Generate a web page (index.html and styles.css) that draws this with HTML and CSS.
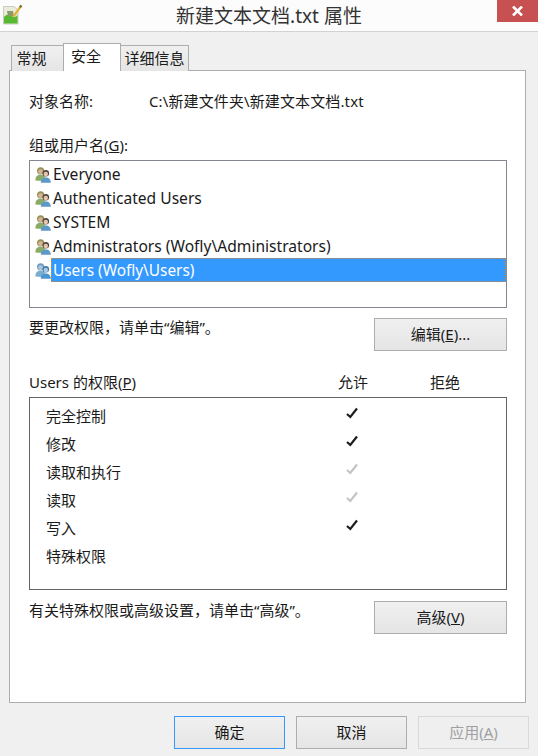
FILE: index.html
```html
<!DOCTYPE html>
<html lang="zh-CN">
<head>
  <meta charset="UTF-8" />
  <title>新建文本文档.txt 属性</title>
  <link rel="stylesheet" href="styles.css">
</head>
<body>
  <svg class="defs" width="0" height="0">
    <symbol id="group" viewBox="0 0 16 16">
      <circle class="back-hair" cx="5.6" cy="3.8" r="3.6"/>
      <circle class="back-skin" cx="5.6" cy="4.7" r="2.4"/>
      <path class="back-body" d="M0.4 13 C0.4 9.5 2.5 7.8 5.5 7.8 C7.5 7.8 9.3 8.6 10 10 L7.5 14 L0.4 13.5 Z"/>
      <circle class="front-hair" cx="10.8" cy="6.2" r="3.3"/>
      <circle class="front-skin" cx="10.8" cy="7" r="2.2"/>
      <path class="front-body" d="M5.8 15.8 C5.8 12.4 7.8 10.4 10.8 10.4 C13.8 10.4 15.8 12.4 15.8 15.8 Z"/>
    </symbol>
    <symbol id="tick" viewBox="0 0 12 12">
      <path d="M1 7 L4.3 10 L11 1.5" fill="none" stroke="currentColor" stroke-width="2.2"/>
    </symbol>
  </svg>

  <div class="window">
    <div class="titlebar">
      <svg class="app-icon" width="22" height="22" viewBox="0 0 22 22">
        <path d="M2.5 3.5 H13 L17 7 V21 H2.5 Z" fill="#e9ecd8" stroke="#c9ccc0"/>
        <path d="M3 14 C6 11 9 11 11 13 C13 14.5 15 14 16.5 12 V20.5 H3 Z" fill="#58b832"/>
        <path d="M6 8 H12 L13 13 H7 Z" fill="#8c9a6a"/>
        <path d="M12.5 13.5 L20 3" stroke="#e3b23c" stroke-width="2.2"/>
        <path d="M19 4.4 L20.4 2.4" stroke="#7a6a3a" stroke-width="2.2"/>
      </svg>
      <span class="title">新建文本文档.txt 属性</span>
      <div class="close">
        <svg width="11" height="10" viewBox="0 0 11 10"><path d="M1 0.5 L10 9.5 M10 0.5 L1 9.5" stroke="#fff" stroke-width="2.6"/></svg>
      </div>
    </div>

    <div class="tabs">
      <div class="tab tab-first">常规</div>
      <div class="tab tab-active">安全</div>
      <div class="tab tab-last">详细信息</div>
    </div>

    <div class="panel">
      <div class="object-row">
        <span class="object-label">对象名称:</span>
        <span class="object-path">C:\新建文件夹\新建文本文档.txt</span>
      </div>

      <div class="group-label">组或用户名(<u>G</u>):</div>
      <div class="listbox">
        <div class="user"><svg class="user-icon"><use href="#group"/></svg><span class="user-name">Everyone</span></div>
        <div class="user"><svg class="user-icon"><use href="#group"/></svg><span class="user-name">Authenticated Users</span></div>
        <div class="user"><svg class="user-icon"><use href="#group"/></svg><span class="user-name">SYSTEM</span></div>
        <div class="user"><svg class="user-icon"><use href="#group"/></svg><span class="user-name">Administrators (Wofly\Administrators)</span></div>
        <div class="user selected"><svg class="user-icon"><use href="#group"/></svg><span class="user-name">Users (Wofly\Users)</span></div>
      </div>

      <div class="action-row">
        <span class="hint">要更改权限，请单击“编辑”。</span>
        <button class="btn">编辑(<u>E</u>)...</button>
      </div>

      <div class="perm-head">
        <span class="perm-title">Users 的权限(<u>P</u>)</span>
        <span class="perm-allow">允许</span>
        <span class="perm-deny">拒绝</span>
      </div>
      <div class="perm-box">
        <div class="perm"><span class="perm-name">完全控制</span><svg class="tick"><use href="#tick"/></svg></div>
        <div class="perm"><span class="perm-name">修改</span><svg class="tick"><use href="#tick"/></svg></div>
        <div class="perm"><span class="perm-name">读取和执行</span><svg class="tick inherited"><use href="#tick"/></svg></div>
        <div class="perm"><span class="perm-name">读取</span><svg class="tick inherited"><use href="#tick"/></svg></div>
        <div class="perm"><span class="perm-name">写入</span><svg class="tick"><use href="#tick"/></svg></div>
        <div class="perm"><span class="perm-name">特殊权限</span></div>
      </div>

      <div class="action-row action-row-adv">
        <span class="hint">有关特殊权限或高级设置，请单击“高级”。</span>
        <button class="btn">高级(<u>V</u>)</button>
      </div>
    </div>

    <div class="footer">
      <button class="btn btn-foot btn-default">确定</button>
      <button class="btn btn-foot">取消</button>
      <button class="btn btn-foot btn-disabled">应用(<u>A</u>)</button>
    </div>
  </div>
</body>
</html>
```

FILE: styles.css
```css
html, body {
  margin: 0;
  height: 756px;
  overflow: hidden;
  background: #fff;
}
body {
  font-family: "Noto Sans", "Noto Sans CJK SC", sans-serif;
  font-size: 15px;
  color: #1a1a1a;
}
.defs {
  position: absolute;
}
.window {
  width: 538px;
  height: 756px;
  background: #f0f0f0;
}
.titlebar {
  position: relative;
  display: flex;
  justify-content: center;
  align-items: center;
  height: 32px;
  background: #fcfcfc;
  border-bottom: 1px solid #d2d2d2;
  box-sizing: border-box;
  font-size: 19px;
  color: #333;
}
.title {
  line-height: 28px;
}
.app-icon {
  position: absolute;
  left: 1px;
  top: 3px;
}
.close {
  position: absolute;
  right: 0;
  top: 0;
  width: 41px;
  height: 22px;
  background: #c75050;
  display: flex;
  justify-content: center;
  align-items: center;
}

/* tabs */
.tabs {
  display: flex;
  align-items: flex-end;
  height: 27px;
  margin: 11px 0 0 11px;
}
.tab {
  box-sizing: border-box;
  height: 26px;
  margin-bottom: -1px;
  border: 1px solid #adadad;
  border-bottom: none;
  background: linear-gradient(#f0f0f0, #e5e5e5);
  text-align: center;
  line-height: 24px;
}
.tab-first {
  width: 52px;
  padding-right: 12px;
  border-right: none;
}
.tab-active {
  position: relative;
  width: 58px;
  height: 28px;
  padding-right: 12px;
  background: #fff;
  line-height: 25px;
}
.tab-last {
  width: 68px;
  border-left: none;
}

.panel {
  box-sizing: border-box;
  width: 517px;
  height: 633px;
  margin-left: 9px;
  padding: 0 18px 0 19px;
  background: #fff;
  border: 1px solid #adadad;
}
.object-row {
  display: flex;
  height: 20px;
  line-height: 20px;
  margin-top: 20px;
}
.object-label {
  width: 120px;
}
.object-path {
  letter-spacing: 0.12px;
}
.group-label {
  height: 20px;
  line-height: 20px;
  margin-top: 24px;
}

/* user list */
.listbox {
  box-sizing: border-box;
  height: 148px;
  margin-top: 5px;
  padding: 1px 0 1px 1px;
  border: 1px solid #828790;
}
.user {
  display: flex;
  align-items: center;
  height: 24px;
  padding-left: 4px;
  --back-hair: #97925a;
  --back-skin: #d8b592;
  --back-body: #8cab68;
  --front-hair: #4f483e;
  --front-skin: #e6c6a8;
  --front-body: #5d97c6;
}
.user-icon {
  width: 16px;
  height: 16px;
  flex-shrink: 0;
  margin-top: 1px;
}
.user-name {
  flex: 1;
  height: 24px;
  line-height: 25px;
  padding-left: 2px;
  font-size: 15.6px;
}
.back-hair { fill: var(--back-hair); }
.back-skin { fill: var(--back-skin); }
.back-body { fill: var(--back-body); }
.front-hair { fill: var(--front-hair); }
.front-skin { fill: var(--front-skin); }
.front-body { fill: var(--front-body); }

.selected {
  --back-hair: #6f9cbf;
  --back-skin: #a8c8e0;
  --back-body: #7aaccd;
  --front-hair: #467aa6;
  --front-skin: #a8cbe8;
  --front-body: #4a94d0;
}
.selected .user-name {
  box-sizing: border-box;
  background: #3399ff;
  color: #fff;
  border: 1px dotted #d98a2b;
  line-height: 23px;
  padding-left: 1px;
  font-size: 15.4px;
}

.action-row {
  display: flex;
  justify-content: space-between;
  align-items: flex-start;
  margin-top: 10px;
  height: 33px;
}
.hint {
  line-height: 18px;
}
.btn {
  box-sizing: border-box;
  width: 133px;
  height: 33px;
  padding: 0 0 2px;
  border: 1px solid #adadad;
  background: linear-gradient(#f0f0f0, #e5e5e5);
  font: inherit;
  color: #1a1a1a;
}

/* permissions */
.perm-head {
  display: flex;
  height: 20px;
  line-height: 20px;
  margin-top: 21px;
}
.perm-title {
  width: 309px;
}
.perm-allow {
  width: 92px;
}
.perm-box {
  box-sizing: border-box;
  height: 193px;
  margin-top: 5px;
  padding: 4px 16px 0;
  border: 1px solid #646464;
}
.perm {
  display: flex;
  align-items: center;
  height: 28px;
}
.perm-name {
  width: 300px;
  line-height: 28px;
}
.tick {
  width: 12px;
  height: 12px;
  margin-top: -7px;
  color: #1c1c1c;
}
.tick.inherited {
  color: #c4c4c4;
}
.action-row-adv {
  margin-top: 11px;
}

.footer {
  display: flex;
  gap: 10px;
  margin: 13px 0 0 174px;
}
.btn-foot {
  width: 111px;
}
.btn-foot + .btn-foot {
  margin-left: 1px;
}
.btn-default {
  border-color: #3399ff;
}
.btn-disabled {
  border-color: #d9d9d9;
  background: #efefef;
  color: #a0a0a0;
}
```
